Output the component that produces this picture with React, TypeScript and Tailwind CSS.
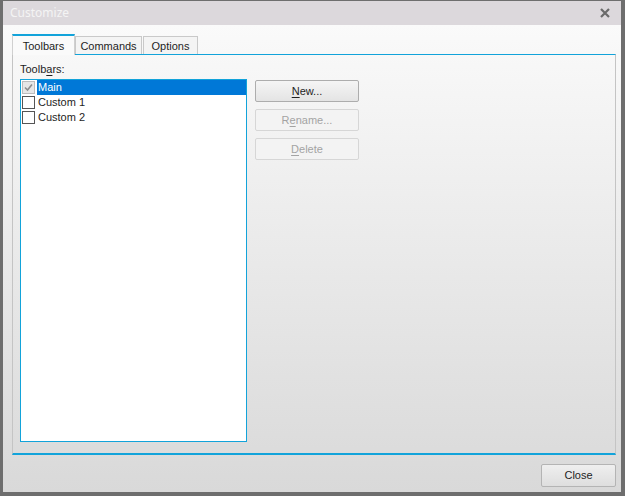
import { useState } from "react";

const rows = [
  { name: "Main", checked: true, disabled: true },
  { name: "Custom 1", checked: false, disabled: false },
  { name: "Custom 2", checked: false, disabled: false },
];

function CheckBox({ checked, disabled }: { checked: boolean; disabled: boolean }) {
  return (
    <span
      className={`flex h-[13px] w-[13px] shrink-0 items-center justify-center border ${
        disabled ? "border-[#bcbcbc] bg-[#e6e6e6]" : "border-[#555] bg-white"
      }`}
    >
      {checked && (
        <svg width="9" height="9" viewBox="0 0 9 9">
          <path d="M1 4.5 L3.5 7 L8 1.5" fill="none" stroke={disabled ? "#8d8d8d" : "#222"} strokeWidth="1.6" />
        </svg>
      )}
    </span>
  );
}

function DlgButton({ children, disabled }: { children: React.ReactNode; disabled?: boolean }) {
  return (
    <button
      className={`h-[22px] w-[104px] rounded-[2px] border text-[11px] leading-none ${
        disabled
          ? "border-[#d6d6d6] bg-[#f3f3f3] text-[#a3a3a3]"
          : "border-[#adadad] bg-gradient-to-b from-[#f5f5f5] to-[#e4e4e4] text-[#1e1e1e]"
      }`}
    >
      {children}
    </button>
  );
}

export default function App() {
  const [selected] = useState(0);

  return (
    <div className="h-[496px] w-[625px] bg-[#6e6e6e] pb-[4px] pl-[3px] pr-[4px] pt-[1px] font-['Liberation_Sans',Arial,sans-serif] text-[11px] text-[#1e1e1e]">
      <div className="flex h-full flex-col">
        <div className="flex h-[24px] shrink-0 items-center justify-between bg-[#dcd8dc] pl-[7px] pr-[11px]">
          <span className="font-['Noto_Sans',sans-serif] text-[12px] text-[#f4f4f4]">Customize</span>
          <svg width="10" height="10" viewBox="0 0 10 10">
            <path d="M1 1 L9 9 M9 1 L1 9" stroke="#6a6a6a" strokeWidth="2.2" />
          </svg>
        </div>

        <div className="flex flex-1 flex-col bg-gradient-to-b from-[#fafafa] to-[#d9d9d9] pl-[9px] pr-[5px] pt-[9px]">
          <div className="relative z-10 flex h-[20px] items-end">
            <div className="-mb-px flex h-[21px] w-[63px] items-center justify-center border-x border-t-2 border-x-[#d0d0d0] border-t-[#12a3da] bg-[#fafafa] pt-px">
              Toolbars
            </div>
            <div className="flex h-[18px] w-[67px] items-center justify-center border border-b-0 border-[#c9c9c9] bg-[#f4f4f4] pt-[2px]">
              Commands
            </div>
            <div className="ml-[1px] flex h-[18px] w-[55px] items-center justify-center border border-b-0 border-[#c9c9c9] bg-[#f4f4f4] pt-[2px]">
              Options
            </div>
          </div>

          <div className="flex h-[401px] flex-col border-x border-b-2 border-t border-x-[#c4c4c4] border-b-[#12a3da] border-t-[#12a3da] pb-[11px] pl-[7px] pt-[6px]">
            <div className="h-[18px] leading-[16px]">
              Toolb<span className="underline underline-offset-2">a</span>rs:
            </div>
            <div className="flex flex-1 gap-[8px]">
              <div className="flex w-[227px] flex-col border border-[#12a3da] bg-white">
                {rows.map((row, i) => (
                  <div key={row.name} className="flex h-[15px] items-center pl-px">
                    <CheckBox checked={row.checked} disabled={row.disabled} />
                    <span
                      className={`ml-[2px] flex h-full flex-1 items-center pl-px leading-none ${
                        i === selected ? "bg-[#0078d7] text-white" : ""
                      }`}
                    >
                      {row.name}
                    </span>
                  </div>
                ))}
              </div>
              <div className="flex flex-col gap-[7px] pt-px">
                <DlgButton>
                  <span className="underline underline-offset-2">N</span>ew...
                </DlgButton>
                <DlgButton disabled>
                  R<span className="underline underline-offset-2">e</span>name...
                </DlgButton>
                <DlgButton disabled>
                  <span className="underline underline-offset-2">D</span>elete
                </DlgButton>
              </div>
            </div>
          </div>

          <div className="flex justify-end pt-[9px]">
            <button className="h-[23px] w-[75px] rounded-[2px] border border-[#b4b4b4] bg-gradient-to-b from-[#efefef] to-[#dedede] text-[11px] leading-none text-[#1e1e1e]">
              Close
            </button>
          </div>
        </div>
      </div>
    </div>
  );
}
